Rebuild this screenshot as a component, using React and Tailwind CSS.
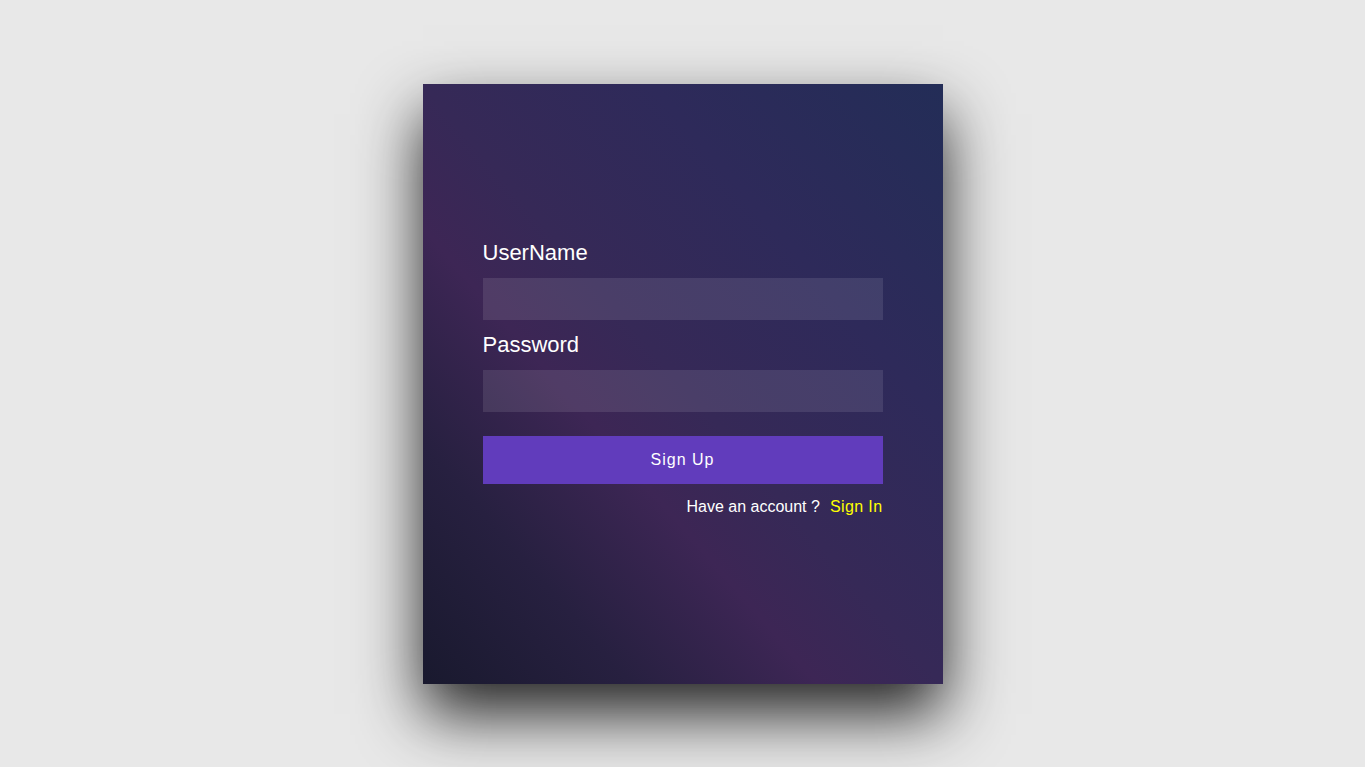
import React, { useState } from "react";

export default function App() {
  const [username, setUsername] = useState("");
  const [password, setPassword] = useState("");

  return (
    <div className="min-h-screen w-full flex items-center justify-center bg-[#e8e8e8] font-['Liberation_Sans',Arial,sans-serif]">
      <div className="w-[520px] h-[600px] px-[60px] pt-[156px] shadow-[0_30px_60px_rgba(0,0,0,0.85)] bg-[linear-gradient(to_top_right,#19192e_0%,#272040_20%,#3d2655_38%,#362957_50%,#2e2a5a_72%,#232d57_100%)]">
        <form onSubmit={(e) => e.preventDefault()} className="flex flex-col">
          <label htmlFor="username" className="block text-[22px] leading-[25px] text-white mb-[13px]">
            UserName
          </label>
          <input
            id="username"
            type="text"
            value={username}
            onChange={(e) => setUsername(e.target.value)}
            className="h-[42px] w-full bg-white/10 text-white px-3 outline-none mb-[12px]"
          />
          <label htmlFor="password" className="block text-[22px] leading-[25px] text-white mb-[13px]">
            Password
          </label>
          <input
            id="password"
            type="password"
            value={password}
            onChange={(e) => setPassword(e.target.value)}
            className="h-[42px] w-full bg-white/10 text-white px-3 outline-none"
          />
          <button
            type="submit"
            className="mt-[24px] h-[48px] w-full bg-[#613cbc] text-white text-base tracking-[1px]"
          >
            Sign Up
          </button>
          <p className="mt-[14px] text-right text-base leading-[18px] text-white">
            Have an account ?
            <a href="#" className="ml-[10px] text-[#ffff00] tracking-[0.4px]">
              Sign In
            </a>
          </p>
        </form>
      </div>
    </div>
  );
}
